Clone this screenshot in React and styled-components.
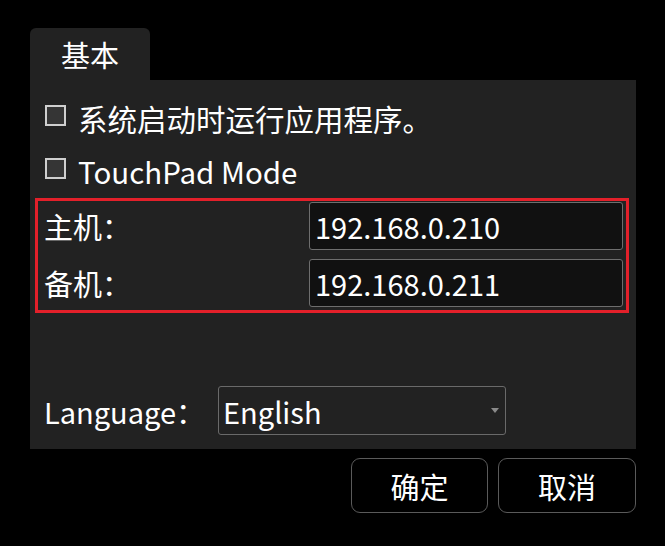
import styled, { createGlobalStyle } from 'styled-components';

const GlobalStyle = createGlobalStyle`
  html, body {
    margin: 0;
    padding: 0;
    background: #000;
  }
  body {
    font-family: "Noto Sans CJK SC", "Noto Sans", sans-serif;
    color: #fff;
  }
`;

const Dialog = styled.div`
  width: 665px;
  height: 546px;
  box-sizing: border-box;
  padding: 28px 0 0 30px;
  background: #000;
  display: flex;
  flex-direction: column;
`;

const Tab = styled.div`
  width: 120px;
  height: 52px;
  background: #222;
  border-radius: 6px 6px 0 0;
  display: flex;
  align-items: center;
  justify-content: center;
  font-size: 29px;
  line-height: 1;
`;

const Panel = styled.div`
  width: 606px;
  height: 369px;
  box-sizing: border-box;
  background: #222;
  padding: 12px 0 14px 0;
  display: flex;
  flex-direction: column;
`;

const CheckRow = styled.label`
  height: 52px;
  display: flex;
  align-items: center;
  gap: 12px;
  padding-left: 15px;
  font-size: 29.5px;
  margin-bottom: 1px;
`;

const Box = styled.span`
  width: 17px;
  height: 17px;
  border: 2px solid #cfcfcf;
  background: #353535;
  margin-bottom: 6px;
  flex: none;
`;

const HostBox = styled.div`
  margin-left: 5px;
  width: 594px;
  box-sizing: border-box;
  border: 3px solid #e3202a;
  padding: 1px 3px 3px 6px;
  display: grid;
  grid-template-columns: 1fr 314px;
  row-gap: 9px;
  align-items: center;
`;

const Label = styled.div`
  font-size: 29px;
  line-height: 1;
`;

const Field = styled.div`
  height: 48px;
  box-sizing: border-box;
  background: #111;
  border: 1px solid #6e6e6e;
  border-radius: 3px;
  display: flex;
  align-items: center;
  padding-left: 5px;
  font-size: 29px;
`;

const LangRow = styled.div`
  margin-top: auto;
  display: flex;
  align-items: center;
  padding-left: 14px;
`;

const LangLabel = styled.div`
  width: 174px;
  font-size: 29px;
`;

const Combo = styled.div`
  width: 288px;
  height: 49px;
  box-sizing: border-box;
  border: 1px solid #6a6a6a;
  border-radius: 3px;
  display: flex;
  align-items: center;
  justify-content: space-between;
  padding: 0 6px 0 4px;
  font-size: 29px;
`;

const Caret = styled.span`
  width: 0;
  height: 0;
  border-left: 4px solid transparent;
  border-right: 4px solid transparent;
  border-top: 5px solid #8a8a8a;
`;

const Buttons = styled.div`
  width: 606px;
  margin-top: 9px;
  display: flex;
  justify-content: flex-end;
  gap: 10px;
`;

const Button = styled.button`
  width: ${(props) => props.$w}px;
  height: 55px;
  background: #000;
  color: #fff;
  border: 1px solid #5a5a5a;
  border-radius: 9px;
  font-family: "Noto Sans CJK SC", sans-serif;
  font-size: 29px;
  padding: 0;
  cursor: pointer;
`;

const App = () => {
  return (
    <Dialog>
      <GlobalStyle />
      <Tab>基本</Tab>
      <Panel>
        <CheckRow>
          <Box />
          系统启动时运行应用程序。
        </CheckRow>
        <CheckRow>
          <Box />
          TouchPad Mode
        </CheckRow>
        <HostBox>
          <Label>主机：</Label>
          <Field>192.168.0.210</Field>
          <Label>备机：</Label>
          <Field>192.168.0.211</Field>
        </HostBox>
        <LangRow>
          <LangLabel>Language：</LangLabel>
          <Combo>
            English
            <Caret />
          </Combo>
        </LangRow>
      </Panel>
      <Buttons>
        <Button $w={137}>确定</Button>
        <Button $w={138}>取消</Button>
      </Buttons>
    </Dialog>
  );
};

export default App;
